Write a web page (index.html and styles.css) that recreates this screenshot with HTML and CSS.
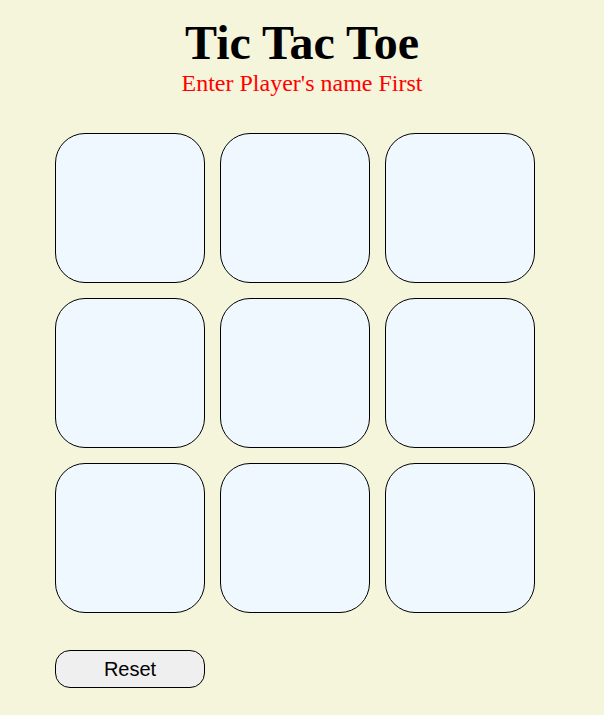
FILE: index.html
```html
<!DOCTYPE html>
<html lang="en">
<head>
<meta charset="utf-8">
<title>Tic Tac Toe</title>
<link rel="stylesheet" href="styles.css">
</head>
<body>
  <header class="heading">
    <h1 class="title">Tic Tac Toe</h1>
    <p class="status">Enter Player's name First</p>
  </header>
  <main class="game">
    <div class="board">
      <button class="cell"></button>
      <button class="cell"></button>
      <button class="cell"></button>
      <button class="cell"></button>
      <button class="cell"></button>
      <button class="cell"></button>
      <button class="cell"></button>
      <button class="cell"></button>
      <button class="cell"></button>
    </div>
    <button class="reset">Reset</button>
  </main>
</body>
</html>
```

FILE: styles.css
```css
html, body {
  margin: 0;
  padding: 0;
}

body {
  background: #f5f5dc;
  font-family: "Liberation Serif", "Times New Roman", serif;
  min-height: 715px;
}

.heading {
  padding-top: 15px;
  text-align: center;
}

.title {
  margin: 0;
  font-size: 48px;
  line-height: 55px;
  font-weight: bold;
  color: #000;
}

.status {
  margin: 0;
  font-size: 24px;
  line-height: 26px;
  color: #ff0000;
}

.game {
  padding: 37px 0 0 55px;
  display: flex;
  flex-direction: column;
  align-items: flex-start;
  gap: 37px;
}

.board {
  display: grid;
  grid-template-columns: repeat(3, 150px);
  grid-auto-rows: 150px;
  gap: 15px;
}

.cell {
  box-sizing: border-box;
  width: 150px;
  height: 150px;
  margin: 0;
  padding: 0;
  background: #f0f8ff;
  border: 1px solid #000;
  border-radius: 30px;
}

.reset {
  box-sizing: border-box;
  width: 150px;
  height: 38px;
  margin: 0;
  padding: 0;
  background: #efefef;
  border: 1px solid #000;
  border-radius: 15px;
  font-family: "Liberation Sans", Arial, sans-serif;
  font-size: 20px;
  color: #000;
}
```
